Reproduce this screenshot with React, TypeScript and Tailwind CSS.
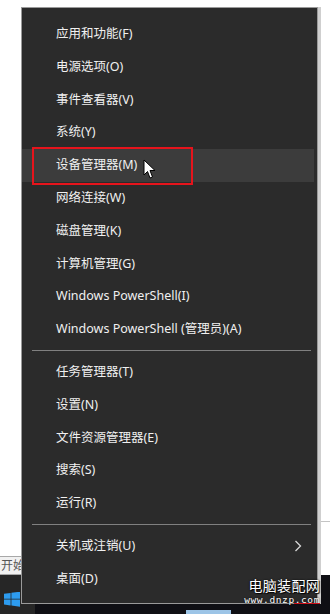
import React from "react";

type Item = { label: string; sub?: boolean } | { sep: true };

const ITEMS: Item[] = [
  { label: "应用和功能(F)" },
  { label: "电源选项(O)" },
  { label: "事件查看器(V)" },
  { label: "系统(Y)" },
  { label: "设备管理器(M)" },
  { label: "网络连接(W)" },
  { label: "磁盘管理(K)" },
  { label: "计算机管理(G)" },
  { label: "Windows PowerShell(I)" },
  { label: "Windows PowerShell (管理员)(A)" },
  { sep: true },
  { label: "任务管理器(T)" },
  { label: "设置(N)" },
  { label: "文件资源管理器(E)" },
  { label: "搜索(S)" },
  { label: "运行(R)" },
  { sep: true },
  { label: "关机或注销(U)", sub: true },
  { label: "桌面(D)" },
];

const ACTIVE = 4;

const font = "font-['Segoe_UI','Noto_Sans','Noto_Sans_CJK_SC',sans-serif]";

function Cursor() {
  return (
    <svg width="14" height="21" viewBox="0 0 14 21" className="absolute left-[121px] top-[10px]">
      <path
        d="M1 1 L1 16 L4.5 12.5 L7 19 L9.5 18 L7 11.5 L12 11.5 Z"
        fill="#fff"
        stroke="#000"
        strokeWidth="1"
        strokeLinejoin="round"
      />
    </svg>
  );
}

function WinLogo() {
  return (
    <svg width="16" height="15" viewBox="0 0 16 15">
      <path
        d="M0 1.8 L6.6 0.9 V6.8 H0 Z M7.4 0.8 L16 -0.3 V6.8 H7.4 Z M0 7.6 H6.6 V13.5 L0 12.6 Z M7.4 7.6 H16 V14.8 L7.4 13.6 Z"
        fill="#2d9cf0"
      />
    </svg>
  );
}

function Menu() {
  return (
    <div className="absolute left-[21px] top-[7px] w-[297px] h-[597px] bg-[#2b2b2b] border border-[#9a9a9a] shadow-[3px_0_0_#cfcfcf] pt-[10px] flex flex-col">
      {ITEMS.map((it, i) =>
        "sep" in it ? (
          <div key={i} className="h-[10px] shrink-0 flex items-center pl-[10px] pr-[6px]">
            <div className="h-px w-full bg-[#808080]" />
          </div>
        ) : (
          <div
            key={i}
            className={`relative h-[32.8px] shrink-0 flex items-center justify-between pl-[34px] pr-[12px] mr-[3px] text-[12.5px] text-[#f0f0f0] ${
              i === ACTIVE ? "bg-[#3c3c3c]" : ""
            }`}
          >
            <span>{it.label}</span>
            {it.sub && (
              <svg width="8" height="12" viewBox="0 0 8 12">
                <polyline points="1.5,1 6.5,6 1.5,11" fill="none" stroke="#d8d8d8" strokeWidth="1.3" />
              </svg>
            )}
            {i === ACTIVE && (
              <>
                <div className="absolute left-[10px] -top-[2px] w-[161px] h-[38px] border-2 border-[#e6141c]" />
                <Cursor />
              </>
            )}
          </div>
        )
      )}
    </div>
  );
}

function Watermark() {
  return (
    <div className="absolute right-[10px] bottom-[9px] flex flex-col items-end">
      <span className="text-[14px] leading-[17px] text-white tracking-[0.3px] [text-shadow:0_0_2px_#000,1px_1px_1px_#000] font-['Noto_Sans_CJK_SC',sans-serif]">
        电脑装配网
      </span>
      <span className="relative text-[9.5px] leading-[11px] text-white tracking-[0.6px] font-['DejaVu_Sans_Mono',monospace] [text-shadow:0_0_2px_#000]">
        www.dnzp.com
        <span className="absolute right-0 bottom-[1px] w-[26px] h-px bg-[#d0121b]" />
      </span>
    </div>
  );
}

export default function App() {
  return (
    <div className={`relative w-[330px] h-[614px] overflow-hidden flex flex-col ${font}`}>
      {/* desktop / window area */}
      <div className="flex-1 bg-white flex flex-col justify-end">
        <div className="flex items-end justify-between mb-[34px]">
          <div />
          <div className="w-[12px] h-px bg-[#c4c4c4]" />
        </div>
        <div className="w-[30px] h-[19px] bg-[#f1f1f1] border border-[#a8a8a8] border-l-0 flex items-center pl-px text-[12px] text-[#575757] leading-none">
          开始
        </div>
      </div>

      {/* taskbar */}
      <div className="h-[39px] bg-[#0f0f14] flex">
        <div className="w-[35px] bg-[#262626] flex items-center pl-[4px] pt-[10px]">
          <WinLogo />
        </div>
        <div className="ml-[151px] mt-auto w-[45px] h-[4px] bg-[#9cc4e6]" />
      </div>

      <Menu />
      <Watermark />
    </div>
  );
}
